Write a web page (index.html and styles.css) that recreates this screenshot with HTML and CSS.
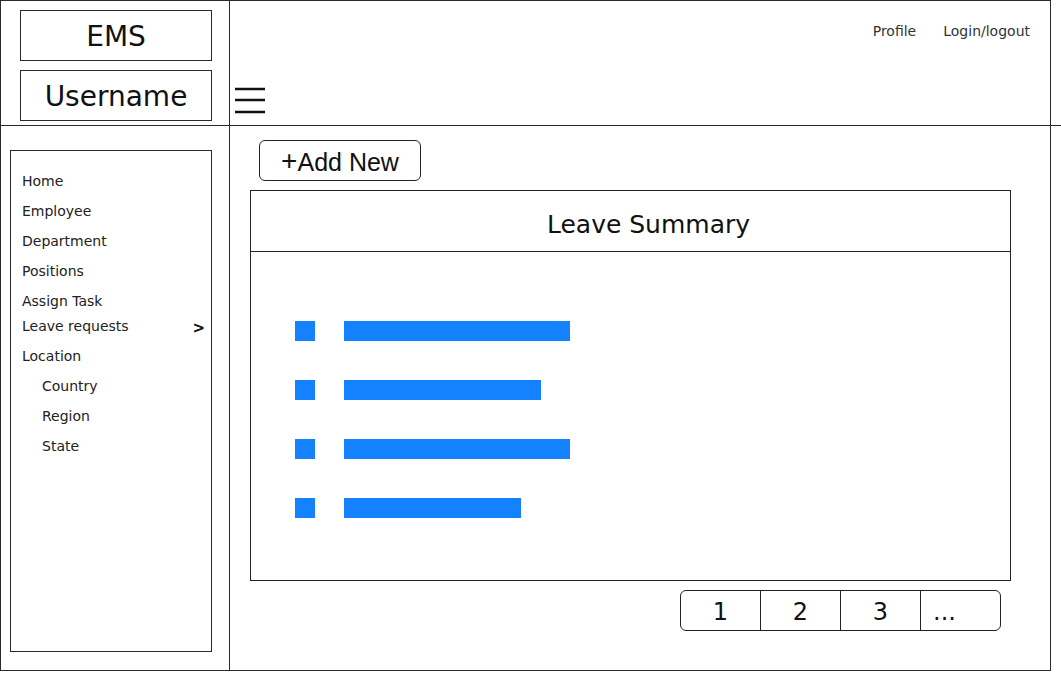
FILE: index.html
```html
<!DOCTYPE html>
<html>
<head>
<meta charset="utf-8">
<link rel="stylesheet" href="styles.css">
</head>
<body>
<div class="app">
  <div class="brand">
    <div class="brand-box">EMS</div>
    <div class="brand-box">Username</div>
  </div>
  <div class="topbar">
    <nav class="topnav">
      <span>Profile</span>
      <span>Login/logout</span>
    </nav>
    <svg class="burger" width="32" height="28" viewBox="0 0 32 28">
      <path d="M1 2 H31 M1 13 H31 M1 25 H31" stroke="#111" stroke-width="2.5" fill="none"/>
    </svg>
    <div class="hline"></div>
  </div>
  <aside class="side">
    <div class="menu">
      <div class="item">Home</div>
      <div class="item">Employee</div>
      <div class="item">Department</div>
      <div class="item">Positions</div>
      <div class="item">Assign Task</div>
      <div class="item leave">Leave requests<span class="caret">&gt;</span></div>
      <div class="item">Location</div>
      <div class="item sub">Country</div>
      <div class="item sub">Region</div>
      <div class="item sub">State</div>
    </div>
  </aside>
  <main class="main">
    <button class="add"><span class="plus">+</span>Add New</button>
    <section class="panel">
      <div class="panel-head">Leave Summary</div>
      <div class="panel-body">
        <div class="row"><span class="sq"></span><span class="bar" style="width:226px"></span></div>
        <div class="row"><span class="sq"></span><span class="bar" style="width:197px"></span></div>
        <div class="row"><span class="sq"></span><span class="bar" style="width:226px"></span></div>
        <div class="row"><span class="sq"></span><span class="bar" style="width:177px"></span></div>
      </div>
    </section>
    <div class="pager">
      <span>1</span><span>2</span><span>3</span><span class="dots">...</span>
    </div>
  </main>
</div>
</body>
</html>
```
FILE: styles.css
```css
* { box-sizing: border-box; }
html, body { margin: 0; padding: 0; background: #fff; }
body { font-family: "DejaVu Sans", Verdana, sans-serif; color: #222; }

.app {
  width: 1051px;
  height: 671px;
  border: 1px solid #2a2a2a;
  display: grid;
  grid-template-columns: 229px 1fr;
  grid-template-rows: 125px 1fr;
}

.brand {
  border-right: 1px solid #2a2a2a;
  border-bottom: 1px solid #2a2a2a;
  padding: 9px 0 0 19px;
  display: flex;
  flex-direction: column;
  gap: 10px;
}
.brand-box {
  width: 192px;
  height: 51px;
  border: 1px solid #2a2a2a;
  display: flex;
  align-items: center;
  justify-content: center;
  font-size: 28px;
  color: #111;
  padding-top: 2px;
}
.brand-box + .brand-box { margin-top: -1px; }

.topbar {
  position: relative;
  border-bottom: 1px solid #2a2a2a;
  display: flex;
  flex-direction: column;
}
.hline {
  position: absolute;
  right: -12px;
  bottom: -1px;
  width: 12px;
  height: 1px;
  background: #2a2a2a;
}
.topnav {
  display: flex;
  justify-content: flex-end;
  gap: 27px;
  padding: 21px 20px 0 0;
  font-size: 14px;
  line-height: 18px;
  color: #333;
}
.burger {
  margin: 47px 0 0 4px;
  display: block;
}

.side {
  border-right: 1px solid #2a2a2a;
  padding: 24px 0 0 9px;
}
.menu {
  width: 202px;
  height: 502px;
  border: 1px solid #2a2a2a;
  padding: 15px 0 0 11px;
  font-size: 14px;
  color: #222;
}
.item {
  height: 30px;
  line-height: 30px;
  position: relative;
}
.item.leave { margin-top: -5px; }
.item.sub { padding-left: 20px; }
.caret {
  position: absolute;
  right: 6px;
  top: 2px;
  font-weight: bold;
  font-size: 15px;
  color: #111;
}

.main {
  padding: 14px 0 0 20px;
  display: flex;
  flex-direction: column;
  align-items: flex-start;
}
.add {
  margin-left: 9px;
  width: 162px;
  height: 41px;
  border: 1px solid #222;
  border-radius: 6px;
  background: #fff;
  font-family: "Liberation Sans", Arial, sans-serif;
  font-size: 25px;
  color: #111;
  padding: 4px 0 0 0;
  display: flex;
  align-items: center;
  justify-content: center;
}
.plus { font-size: 28px; line-height: 1; margin-top: -4px; }

.panel {
  margin-top: 9px;
  width: 761px;
  height: 391px;
  border: 1px solid #222;
  display: flex;
  flex-direction: column;
}
.panel-head {
  height: 61px;
  border-bottom: 1px solid #222;
  display: flex;
  align-items: center;
  justify-content: center;
  font-size: 25px;
  color: #111;
  padding: 6px 0 0 36px;
}
.panel-body {
  padding: 69px 0 0 44px;
  display: flex;
  flex-direction: column;
  gap: 39px;
}
.row {
  display: flex;
  gap: 29px;
  height: 20px;
}
.sq, .bar {
  display: block;
  height: 20px;
  background: #1482ff;
}
.sq { width: 20px; }

.pager {
  margin: 9px 0 0 430px;
  width: 321px;
  height: 41px;
  border: 1px solid #222;
  border-radius: 6px;
  display: flex;
  font-size: 24px;
  color: #111;
}
.pager span {
  flex: 0 0 80px;
  display: flex;
  align-items: center;
  justify-content: center;
  border-left: 1px solid #222;
  padding-top: 3px;
}
.pager span:first-child { flex-basis: 79px; border-left: 0; }
.pager .dots { justify-content: flex-start; padding-left: 12px; padding-top: 2px; }
```
